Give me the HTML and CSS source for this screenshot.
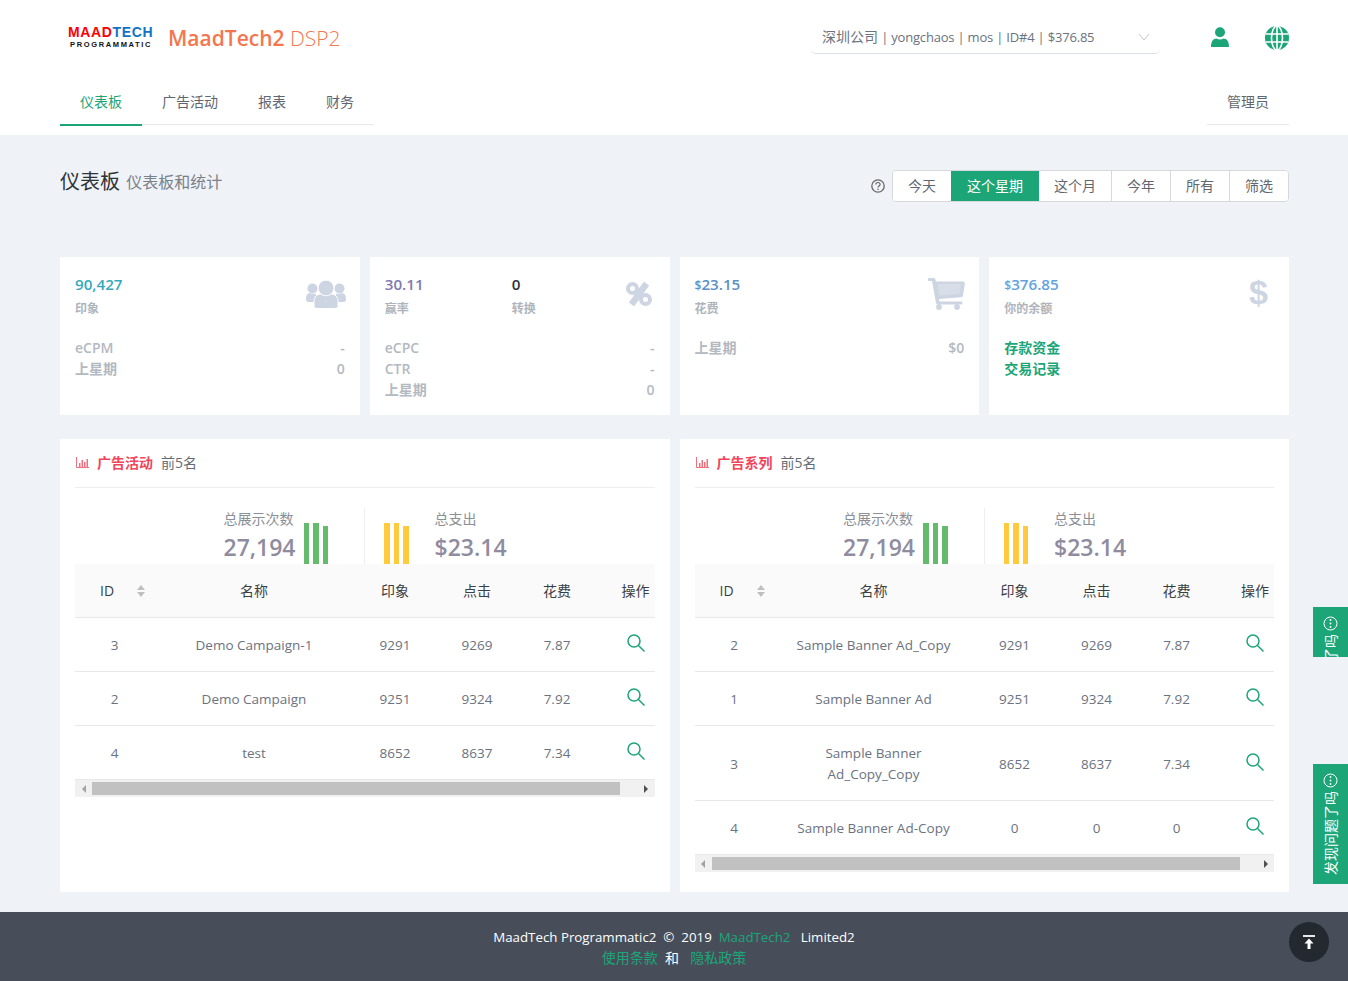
FILE: index.html
```html
<!DOCTYPE html>
<html lang="zh-CN">
<head>
<meta charset="utf-8">
<title>MaadTech2 DSP2</title>
<link rel="stylesheet" href="styles.css">
</head>
<body>
<header class="header">
  <div class="top">
    <div class="brand">
      <div class="logo">
        <div class="logo-main"><span class="red">MAAD</span><span class="blue">TECH</span></div>
        <div class="logo-sub">PROGRAMMATIC</div>
      </div>
      <div class="brand-name"><b>MaadTech2</b> <span>DSP2</span></div>
    </div>
    <div class="top-right">
      <div class="account">
        <span><span class="zh">深圳公司</span> | yongchaos | mos | ID#4 | $376.85</span>
        <svg class="chev" width="12" height="8" viewBox="0 0 12 8"><path d="M1 1l5 6 5-6" fill="none" stroke="#c8c8c8" stroke-width="1"/></svg>
      </div>
      <svg class="user" width="18" height="20" viewBox="0 0 18 20"><circle cx="9" cy="5.200" r="5" fill="#1ca678"/><path d="M0 20c0-5 1.500-8 5.500-8.500 2 1.300 5 1.300 7 0 4 .5 5.500 3.500 5.500 8.500z" fill="#1ca678"/></svg>
      <svg class="globe" width="24" height="24" viewBox="0 0 24 24">
        <circle cx="12" cy="12" r="12" fill="#1ca678"/>
        <g fill="none" stroke="#fff" stroke-width="1.600">
          <ellipse cx="12" cy="12" rx="5.500" ry="12"/>
          <path d="M12 0v24M1 8h22M1 16h22"/>
        </g>
      </svg>
    </div>
  </div>
  <nav class="nav">
    <div class="tabs">
      <a class="tab active">仪表板</a>
      <a class="tab">广告活动</a>
      <a class="tab">报表</a>
      <a class="tab">财务</a>
    </div>
    <div class="tabs"><a class="tab">管理员</a></div>
  </nav>
</header>

<main class="main">
  <div class="title-row">
    <h1 class="title">仪表板 <small>仪表板和统计</small></h1>
    <div class="range">
      <svg class="help" width="14" height="14" viewBox="0 0 14 14"><circle cx="7" cy="7" r="6.200" fill="none" stroke="#666" stroke-width="1.300"/><path d="M4.900 5.500c0-1.300 1-2 2.100-2s2.100.7 2.100 1.900c0 1.500-2.100 1.500-2.100 3" fill="none" stroke="#666" stroke-width="1.200"/><circle cx="7" cy="10.300" r=".8" fill="#666"/></svg>
      <div class="btn-group">
        <button class="btn first">今天</button>
        <button class="btn on">这个星期</button>
        <button class="btn">这个月</button>
        <button class="btn">今年</button>
        <button class="btn">所有</button>
        <button class="btn">筛选</button>
      </div>
    </div>
  </div>

  <section class="cards">
    <div class="card">
      <div class="card-top">
        <div class="metric"><div class="num teal">90,427</div><div class="lab">印象</div></div>
        <svg class="ico users" width="40" height="28" viewBox="0 0 40 28" fill="#cdd5e2">
          <circle cx="6.500" cy="8.500" r="5"/><circle cx="33.500" cy="8.500" r="5"/>
          <path d="M0 19c0-4 1.500-6 4-6 1.500 1 3.500 1 5.500.5L12 22H2c-1 0-2-1-2-3zM40 19c0-4-1.500-6-4-6-1.500 1-3.500 1-5.500.5L28 22h10c1 0 2-1 2-3z"/>
          <path d="M8 28V21c0-4 3-7 6.500-7 3.500 1.800 7.500 1.800 11 0 3.500 0 6.500 3 6.500 7v7z" stroke="#fff" stroke-width="1"/>
          <path d="M9 24v1.500C9 27 10 28 12 28h16c2 0 3-1 3-2.500V24z"/>
          <circle cx="20" cy="8" r="7.800" stroke="#fff" stroke-width=".8"/>
        </svg>
      </div>
      <div class="rows"><div class="row"><span>eCPM</span><span>-</span></div><div class="row"><span>上星期</span><span>0</span></div></div>
    </div>
    <div class="card">
      <div class="card-top">
        <div class="metric wide"><div class="num purple">30.11</div><div class="lab">赢率</div></div>
        <div class="metric grow"><div class="num dark">0</div><div class="lab">转换</div></div>
        <svg class="ico pct" width="26" height="24" viewBox="0 0 26 24" fill="none" stroke="#cdd5e2">
          <circle cx="6.500" cy="6.500" r="4.500" stroke-width="4"/><circle cx="19.500" cy="17.500" r="4.500" stroke-width="4"/><path d="M20.500 1.500L5.500 22.500" stroke-width="6.500"/>
        </svg>
      </div>
      <div class="rows"><div class="row"><span>eCPC</span><span>-</span></div><div class="row"><span>CTR</span><span>-</span></div><div class="row"><span>上星期</span><span>0</span></div></div>
    </div>
    <div class="card">
      <div class="card-top">
        <div class="metric"><div class="num blue2"><small>$</small>23.15</div><div class="lab">花费</div></div>
        <svg class="ico cart" width="37" height="32" viewBox="0 0 37 32" fill="#cdd5e2">
          <path d="M0 0h5.500c1 0 1.700.6 2 1.500L8 3.500h27c1.200 0 2 1 1.800 2.200l-1.800 12c-.2 1-1 1.500-2 1.600l-22 1.700.5 2.500H33c1 0 1.500.6 1.500 1.500s-.5 1.500-1.500 1.500H10c-1 0-1.700-.6-2-1.500L4 3H0z"/>
          <circle cx="11" cy="29" r="2.900"/><circle cx="29" cy="29" r="2.900"/>
          <path d="M9.500 6l2 11.500 20-1.500 1.500-10z" fill="#d8dee8"/>
        </svg>
      </div>
      <div class="rows"><div class="row"><span>上星期</span><span>$0</span></div></div>
    </div>
    <div class="card">
      <div class="card-top">
        <div class="metric"><div class="num blue3"><small>$</small>376.85</div><div class="lab">你的余额</div></div>
        <span class="dollar">$</span>
      </div>
      <div class="rows links"><a>存款资金</a><a>交易记录</a></div>
    </div>
  </section>

  <section class="panels">
    <article class="panel">
      <div class="panel-head">
        <svg class="chart" width="13" height="11" viewBox="0 0 13 11"><path d="M.5 0v10.500H13" fill="none" stroke="#f0707f"/><path d="M3 6h1.500v4H3zM5.500 3H7v7H5.500zM8 5h1.500v5H8zM10.500 2H12v8h-1.500z" fill="#f0707f"/></svg>
        <strong>广告活动</strong><span>前5名</span>
      </div>
      <div class="summary">
        <div class="sum sum-l">
          <div class="sum-text"><div class="sum-lab">总展示次数</div><div class="sum-num">27,194</div></div>
          <div class="bars green"><i class="b1"></i><i class="b1"></i><i class="b2"></i></div>
        </div>
        <div class="sum sum-r">
          <div class="bars yellow"><i class="b1"></i><i class="b1"></i><i class="b2"></i></div>
          <div class="sum-text"><div class="sum-lab">总支出</div><div class="sum-num">$23.14</div></div>
        </div>
      </div>
      <div class="table-wrap">
        <table class="table">
          <colgroup><col class="c-id"><col class="c-name"><col class="c-num"><col class="c-num"><col class="c-fee"><col class="c-op"></colgroup>
          <thead><tr><th class="th-id"><div class="id-head">ID<span class="sorter"><i class="up"></i><i class="down"></i></span></div></th><th>名称</th><th>印象</th><th>点击</th><th>花费</th><th>操作</th></tr></thead>
          <tbody>
            <tr><td>3</td><td>Demo Campaign-1</td><td>9291</td><td>9269</td><td>7.87</td><td><svg class="zoom" width="18" height="18" viewBox="0 0 18 18"><circle cx="7" cy="7" r="6" fill="none" stroke="#1ca678" stroke-width="1.500"/><path d="M11.500 11.500L17.500 17.500" stroke="#1ca678" stroke-width="1.500"/></svg></td></tr>
            <tr><td>2</td><td>Demo Campaign</td><td>9251</td><td>9324</td><td>7.92</td><td><svg class="zoom" width="18" height="18" viewBox="0 0 18 18"><circle cx="7" cy="7" r="6" fill="none" stroke="#1ca678" stroke-width="1.500"/><path d="M11.500 11.500L17.500 17.500" stroke="#1ca678" stroke-width="1.500"/></svg></td></tr>
            <tr><td>4</td><td>test</td><td>8652</td><td>8637</td><td>7.34</td><td><svg class="zoom" width="18" height="18" viewBox="0 0 18 18"><circle cx="7" cy="7" r="6" fill="none" stroke="#1ca678" stroke-width="1.500"/><path d="M11.500 11.500L17.500 17.500" stroke="#1ca678" stroke-width="1.500"/></svg></td></tr>
          </tbody>
        </table>
      </div>
      <div class="scrollbar"><span class="arrow left"></span><span class="thumb"></span><span class="arrow right"></span></div>
    </article>

    <article class="panel">
      <div class="panel-head">
        <svg class="chart" width="13" height="11" viewBox="0 0 13 11"><path d="M.5 0v10.500H13" fill="none" stroke="#f0707f"/><path d="M3 6h1.500v4H3zM5.500 3H7v7H5.500zM8 5h1.500v5H8zM10.500 2H12v8h-1.500z" fill="#f0707f"/></svg>
        <strong>广告系列</strong><span>前5名</span>
      </div>
      <div class="summary">
        <div class="sum sum-l">
          <div class="sum-text"><div class="sum-lab">总展示次数</div><div class="sum-num">27,194</div></div>
          <div class="bars green"><i class="b1"></i><i class="b1"></i><i class="b2"></i></div>
        </div>
        <div class="sum sum-r">
          <div class="bars yellow"><i class="b1"></i><i class="b1"></i><i class="b2"></i></div>
          <div class="sum-text"><div class="sum-lab">总支出</div><div class="sum-num">$23.14</div></div>
        </div>
      </div>
      <div class="table-wrap">
        <table class="table">
          <colgroup><col class="c-id"><col class="c-name"><col class="c-num"><col class="c-num"><col class="c-fee"><col class="c-op"></colgroup>
          <thead><tr><th class="th-id"><div class="id-head">ID<span class="sorter"><i class="up"></i><i class="down"></i></span></div></th><th>名称</th><th>印象</th><th>点击</th><th>花费</th><th>操作</th></tr></thead>
          <tbody>
            <tr><td>2</td><td>Sample Banner Ad_Copy</td><td>9291</td><td>9269</td><td>7.87</td><td><svg class="zoom" width="18" height="18" viewBox="0 0 18 18"><circle cx="7" cy="7" r="6" fill="none" stroke="#1ca678" stroke-width="1.500"/><path d="M11.500 11.500L17.500 17.500" stroke="#1ca678" stroke-width="1.500"/></svg></td></tr>
            <tr><td>1</td><td>Sample Banner Ad</td><td>9251</td><td>9324</td><td>7.92</td><td><svg class="zoom" width="18" height="18" viewBox="0 0 18 18"><circle cx="7" cy="7" r="6" fill="none" stroke="#1ca678" stroke-width="1.500"/><path d="M11.500 11.500L17.500 17.500" stroke="#1ca678" stroke-width="1.500"/></svg></td></tr>
            <tr><td>3</td><td>Sample Banner<br>Ad_Copy_Copy</td><td>8652</td><td>8637</td><td>7.34</td><td><svg class="zoom" width="18" height="18" viewBox="0 0 18 18"><circle cx="7" cy="7" r="6" fill="none" stroke="#1ca678" stroke-width="1.500"/><path d="M11.500 11.500L17.500 17.500" stroke="#1ca678" stroke-width="1.500"/></svg></td></tr>
            <tr><td>4</td><td>Sample Banner Ad-Copy</td><td>0</td><td>0</td><td>0</td><td><svg class="zoom" width="18" height="18" viewBox="0 0 18 18"><circle cx="7" cy="7" r="6" fill="none" stroke="#1ca678" stroke-width="1.500"/><path d="M11.500 11.500L17.500 17.500" stroke="#1ca678" stroke-width="1.500"/></svg></td></tr>
          </tbody>
        </table>
      </div>
      <div class="scrollbar"><span class="arrow left"></span><span class="thumb"></span><span class="arrow right"></span></div>
    </article>
  </section>
</main>

<footer class="footer">
  <div class="foot-line">MaadTech Programmatic2&nbsp; ©&nbsp; 2019&nbsp; <a>MaadTech2</a>&nbsp;&nbsp; Limited2</div>
  <div><a>使用条款</a>&nbsp; 和 &nbsp;<a class="foot-last">隐私政策</a></div>
  <button class="to-top" aria-label="top"><svg width="14" height="14" viewBox="0 0 14 14"><path d="M1 1h12" stroke="#fff" stroke-width="1.800"/><path d="M7 3.500L11.500 8.500H8.500V14H5.500V8.500H2.500z" fill="#fff"/></svg></button>
</footer>

<aside class="fb fb-a">
  <svg width="15" height="15" viewBox="0 0 15 15"><circle cx="7.500" cy="7.500" r="6.500" fill="none" stroke="#fff" stroke-width="1"/><path d="M7.500 4v.01M7.500 7.500v.01M7.500 11v.01" stroke="#fff" stroke-width="1.800" stroke-linecap="round"/></svg>
  <span class="fb-text">发现问题了吗</span>
</aside>
<aside class="fb fb-b">
  <svg width="15" height="15" viewBox="0 0 15 15"><circle cx="7.500" cy="7.500" r="6.500" fill="none" stroke="#fff" stroke-width="1"/><path d="M7.500 4v.01M7.500 7.500v.01M7.500 11v.01" stroke="#fff" stroke-width="1.800" stroke-linecap="round"/></svg>
  <span class="fb-text">发现问题了吗</span>
</aside>
</body>
</html>
```
FILE: styles.css
```css
* { box-sizing: border-box; }
html, body { margin: 0; padding: 0; }
body {
  font-family: "Open Sans", "Noto Sans CJK SC", sans-serif;
  font-size: 14px;
  line-height: 21px;
  color: #6b7280;
  background: #eff2f7;
  min-height: 981px;
  overflow: hidden;
}
.header { background: #fff; height: 135px; padding: 0 59px 0 60px; }
.top { height: 78px; display: flex; justify-content: space-between; align-items: flex-start; }
.brand { display: flex; align-items: center; padding: 25px 0 0 8px; }
.logo { width: 100px; margin-bottom: 2px; font-family: "Liberation Sans", sans-serif; font-weight: 700; }
.logo-main { font-size: 14px; line-height: 14px; letter-spacing: .65px; white-space: nowrap; }
.logo-sub { font-size: 7.500px; line-height: 9px; letter-spacing: 1.650px; color: #111; padding-left: 2px; margin-top: 1px; white-space: nowrap; }
.red { color: #f00; }
.blue { color: #1273c4; }
.brand-name { font-size: 21px; line-height: 26px; color: #f4764f; white-space: nowrap; }
.brand-name b { font-weight: 600; }
.brand-name span { font-weight: 300; }
.top-right { display: flex; align-items: flex-start; padding-top: 26px; }
.account {
  width: 349px; height: 28px; padding: 0 10px 0 11px;
  display: flex; justify-content: space-between; align-items: flex-start;
  border-bottom: 1px solid #dcdfe3; border-radius: 0 0 5px 5px;
  color: #6b7280; font-size: 13px; line-height: 22px; letter-spacing: -.2px;
}
.zh { font-size: 14px; letter-spacing: 0; }
.chev { margin-top: 7px; }
.user { margin: 1px 0 0 51px; }
.globe { margin-left: 36px; }
.nav { height: 48px; display: flex; justify-content: space-between; align-items: flex-start; }
.tabs { display: flex; border-bottom: 1px solid #e6e8eb; height: 47px; }
.tab { padding: 0 20px; line-height: 48px; color: #5f6670; height: 48px; }
.tab.active { color: #1ca678; border-bottom: 2px solid #1ca678; }

.main { padding: 35px 59px 0 60px; }
.title-row { display: flex; justify-content: space-between; align-items: flex-start; height: 32px; }
.title { margin: 1px 0 0; font-size: 20px; font-weight: 400; line-height: 22px; color: #2e3338; }
.title small { font-size: 16px; color: #7a808a; margin-left: 1px; vertical-align: 1px; }
.range { display: flex; align-items: center; gap: 7px; }
.help { display: block; }
.btn-group { display: flex; border: 1px solid #d6d8db; border-radius: 4px; height: 32px; background: #fff; overflow: hidden; }
.btn {
  font: inherit; color: #5f6670; background: #fff; border: 0; border-right: 1px solid #d6d8db;
  padding: 0 15px; height: 30px; line-height: 30px; margin: 0;
}
.btn.first { border-right: 0; }
.btn:last-child { border-right: 0; }
.btn.on { background: #1ca678; color: #fff; border-right: 0; padding: 0 16px; }

.cards { display: grid; grid-template-columns: repeat(4, 1fr); gap: 10px; margin-top: 55px; }
.card { background: #fff; height: 158px; padding: 17px 15px 0; display: flex; flex-direction: column; }
.card-top { display: flex; align-items: flex-start; height: 63px; }
.metric { flex: 1; }
.metric.wide { flex: 0 0 127px; }
.num { font-size: 15.200px; font-weight: 600; line-height: 21px; }
.num small { font-size: 12px; line-height: 1; }
.lab { font-size: 12px; font-weight: 600; line-height: 21px; margin-top: 3px; color: #aeb4bc; }
.teal { color: #36a9bd; }
.purple { color: #8079b0; }
.dark { color: #2e3338; }
.blue2 { color: #5b8fc7; }
.blue3 { color: #63a2e0; }
.ico { margin-top: 6px; flex: none; }
.users { margin-right: -1px; }
.pct { margin-right: 3px; margin-top: 8px; }
.cart { margin: 4px -1px 0 0; }
.dollar { font-family: "Liberation Sans", sans-serif; font-weight: 700; font-size: 34px; line-height: 36px; color: #cdd5e2; margin: 0 6px 0 0; }
.rows { display: flex; flex-direction: column; }
.row { display: flex; justify-content: space-between; font-weight: 600; font-size: 14px; color: #b3b9c1; line-height: 21px; }
.links a { color: #1ca678; font-weight: 600; line-height: 21px; }

.panels { display: grid; grid-template-columns: repeat(2, 1fr); gap: 10px; margin-top: 24px; }
.panel { background: #fff; padding: 0 15px 20px; min-width: 0; }
.panel-head { height: 49px; border-bottom: 1px solid #eceef0; display: flex; align-items: center; padding: 0 0 2px 1px; }
.chart { margin-right: 8px; }
.panel-head strong { color: #f0455a; font-weight: 600; margin-right: 8px; }
.panel-head span { color: #646b76; }
.summary { height: 76px; display: flex; overflow: hidden; }
.sum { display: flex; align-items: flex-end; height: 56px; margin-top: 20px; }
.sum-l { width: 290px; justify-content: flex-end; border-right: 1px solid #eceef0; padding-right: 36px; }
.sum-r { padding-left: 19px; }
.sum-lab { color: #8a8f98; font-size: 14px; line-height: 21px; }
.sum-num { color: #8f8ca0; font-size: 23px; line-height: 36px; font-weight: 600; white-space: nowrap; height: 35px; }
.bars { display: flex; gap: 4px; align-items: flex-end; height: 42px; }
.bars i { display: block; width: 5.500px; }
.bars .b1 { height: 41px; }
.bars .b2 { height: 38px; }
.green { margin-left: 8px; }
.green i { background: #63bb6b; }
.yellow { margin-right: 26px; }
.yellow i { background: #ffcb3d; }
.table-wrap { overflow: hidden; }
.table { width: 600px; table-layout: fixed; border-collapse: separate; border-spacing: 0; text-align: center; }
.c-id { width: 79px; }
.c-name { width: 200px; }
.c-num { width: 82px; }
.c-fee { width: 78px; }
.c-op { width: 79px; }
.table th { height: 54px; background: #fafafa; color: #3b3f45; font-weight: 400; border-bottom: 1px solid #e8e8e8; padding: 0; }
.table td { color: #6b7280; font-size: 13.500px; border-bottom: 1px solid #e8e8e8; padding: 17px 0 15px; }
.id-head { display: flex; align-items: center; padding-left: 25px; }
.sorter { display: flex; flex-direction: column; gap: 2px; margin-left: 23px; }
.sorter i { display: block; width: 0; height: 0; border-left: 4px solid transparent; border-right: 4px solid transparent; }
.up { border-bottom: 5px solid #bfbfbf; }
.down { border-top: 5px solid #bfbfbf; }
.zoom { display: block; margin: -5px auto 0; }
.scrollbar { height: 17px; background: #f1f1f1; display: flex; align-items: center; }
.arrow { width: 17px; height: 17px; flex: none; display: flex; align-items: center; justify-content: center; }
.arrow::before { content: ""; border-top: 4px solid transparent; border-bottom: 4px solid transparent; }
.arrow.left::before { border-right: 4px solid #a3a3a3; }
.arrow.right { margin-left: auto; }
.arrow.right::before { border-left: 4px solid #505050; }
.thumb { width: 528px; height: 13px; background: #c1c1c1; }

.footer {
  position: relative; margin-top: 20px; height: 69px; background: #474e5a;
  color: #fff; text-align: center; padding-top: 15px;
}
.foot-line { font-size: 13.300px; margin-bottom: -1px; }
.footer a { color: #1ca678; }
.footer .foot-last { margin-left: 4px; }
.to-top {
  position: absolute; right: 19px; top: 10px; width: 40px; height: 40px; border-radius: 50%;
  background: #24282f; border: 0; padding: 0; display: flex; align-items: center; justify-content: center;
}
.fb {
  position: fixed; right: 0; width: 35px; background: #1ca678; color: #fff; overflow: hidden;
  display: flex; flex-direction: column; align-items: center; padding-top: 9px;
}
.fb svg { flex: none; margin-bottom: 3px; }
.fb-a { top: 607px; height: 50px; }
.fb-b { top: 764px; height: 120px; }
.fb-text { flex: none; writing-mode: vertical-rl; text-orientation: sideways; transform: rotate(180deg); white-space: nowrap; line-height: 16px; font-size: 14px; }
```
